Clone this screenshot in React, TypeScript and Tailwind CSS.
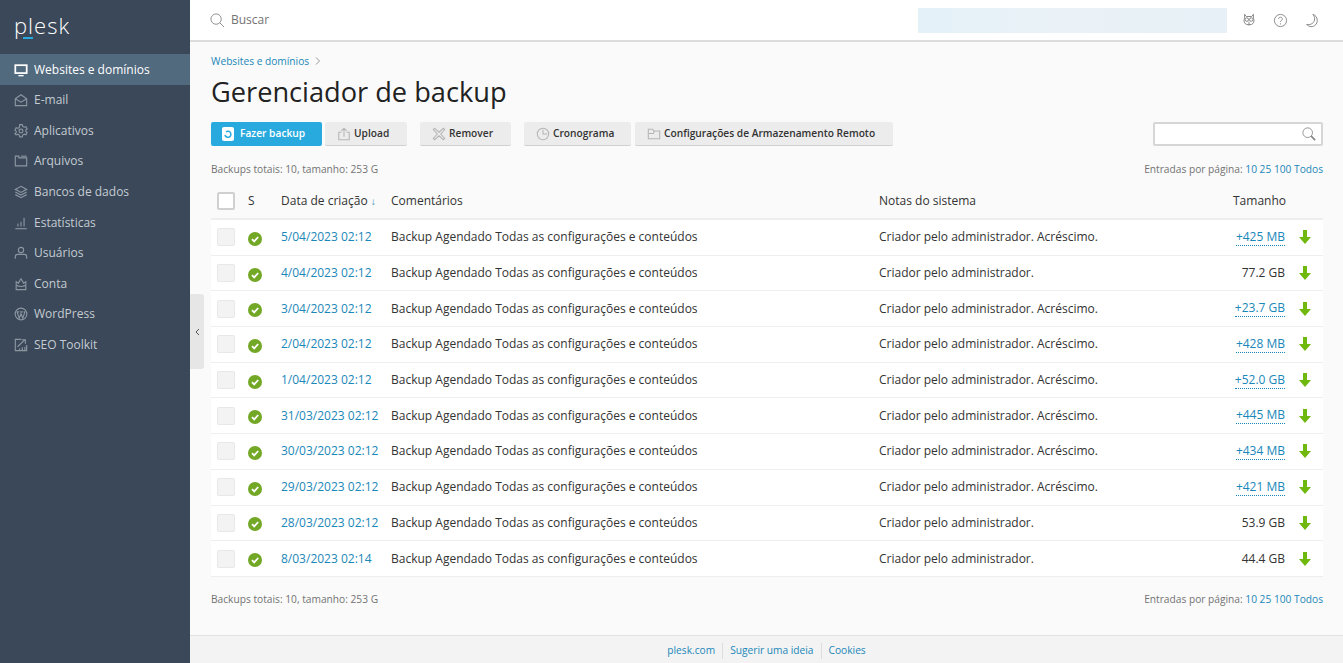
import React from 'react';

const navItems: { label: string; icon: React.ReactNode }[] = [
  { label: 'Websites e domínios', icon: <><rect x="1.5" y="2.5" width="13" height="9" strokeWidth="2" /><path d="M5 14.5h6" strokeWidth="1.5" /></> },
  { label: 'E-mail', icon: <><path d="M1.5 6.5 8 2l6.5 4.5v8h-13z" /><path d="M1.5 6.5 8 10.5l6.5-4" /></> },
  { label: 'Aplicativos', icon: <><path d="M6.5 1.5h3l.4 2 1.8 1 1.9-.7 1.4 2.6-1.5 1.3v1.600l1.500 1.300-1.400 2.600-1.900-.7-1.800 1-.4 2h-3l-.4-2-1.800-1-1.900.7L1 11.900l1.500-1.300V9L1 7.700l1.400-2.600 1.900.7 1.800-1z" transform="translate(0 -.8)" /><circle cx="8" cy="8" r="2.200" /></> },
  { label: 'Arquivos', icon: <><path d="M1.500 13.500v-11h4v2h9v9z" /><path d="M8 2.500h6.500" /></> },
  { label: 'Bancos de dados', icon: <><path d="M8 1.500 14.500 5 8 8.500 1.500 5z" /><path d="m1.500 8 6.500 3.500L14.500 8" /><path d="m1.500 11 6.500 3.500 6.500-3.500" /></> },
  { label: 'Estatísticas', icon: <><path d="M1.500 14.500h13" /><path d="M4.500 12V8.500M8 12V6.500M11.500 12V2" /></> },
  { label: 'Usuários', icon: <><circle cx="8" cy="4.500" r="3" /><path d="M1.500 14.500V12c0-1.500 1.200-2.500 2.500-2.500h8c1.300 0 2.500 1 2.500 2.500v2.500" /></> },
  { label: 'Conta', icon: <><path d="M2.500 5.500 5 7l3-5 3 5 2.500-1.500V14.500h-11z" /><path d="M2.500 9.500c3 1.500 8 1.500 11 0" /></> },
  { label: 'WordPress', icon: <><circle cx="8" cy="8" r="6.700" /><path d="M3.500 5.500 6 13l2-5.500L10 13l2.500-7.500M3 5.500h3M7 5.500h3M11 5.500h2" /></> },
  { label: 'SEO Toolkit', icon: <><path d="M8 1.500H1.500v13h13V8" /><path d="m4 10 8-7.500M8.500 2H13v4.500" /><path d="M6.500 14v-2M9.500 14v-3.500M12.500 14v-4" /></> },
];

const rows = [
  { date: '5/04/2023 02:12', inc: true, size: '+425 MB' },
  { date: '4/04/2023 02:12', inc: false, size: '77.2 GB' },
  { date: '3/04/2023 02:12', inc: true, size: '+23.7 GB' },
  { date: '2/04/2023 02:12', inc: true, size: '+428 MB' },
  { date: '1/04/2023 02:12', inc: true, size: '+52.0 GB' },
  { date: '31/03/2023 02:12', inc: true, size: '+445 MB' },
  { date: '30/03/2023 02:12', inc: true, size: '+434 MB' },
  { date: '29/03/2023 02:12', inc: true, size: '+421 MB' },
  { date: '28/03/2023 02:12', inc: false, size: '53.9 GB' },
  { date: '8/03/2023 02:14', inc: false, size: '44.4 GB' },
];

function Summary() {
  return (
    <div className="flex justify-between text-[10.2px] leading-[14px] text-[#737373]">
      <span>Backups totais: 10, tamanho: 253 G</span>
      <span>
        Entradas por página: <span className="text-[#1a87b9]">10 25 100 Todos</span>
      </span>
    </div>
  );
}

function ToolButton({ label, icon, className }: { label: string; icon: React.ReactNode; className: string }) {
  return (
    <button className={`flex h-6 items-center rounded-[2px] border-b border-[#d0d0d0] bg-[#ececec] pl-[12px] text-[10.2px] font-semibold text-[#333] ${className}`}>
      <svg width="14" height="14" viewBox="0 0 16 16" fill="none" stroke="#b5b5b5" strokeWidth="1.200" className="mr-[3px]">
        {icon}
      </svg>
      {label}
    </button>
  );
}

export default function App() {
  return (
    <div className="flex h-[663px] w-[1343px] overflow-hidden bg-[#fafafa] font-['Open_Sans',sans-serif]">
      <aside className="w-[190px] shrink-0 bg-[#3a4859]">
        <div className="relative h-[54px] pl-[14px] pt-[7px] text-[22px] font-light leading-[36px] tracking-[1px] text-white">
          plesk
          <div className="absolute left-[23px] top-[37px] h-[2px] w-[10px] bg-[#28aade]" />
        </div>
        <nav>
          {navItems.map((item, i) => (
            <div
              key={item.label}
              className={`flex h-[30.55px] items-center pl-[14px] pt-[1px] text-[12px] ${i === 0 ? 'bg-[#526a7e] text-white' : 'text-[#c5cbd1]'}`}
            >
              <svg width="14" height="14" viewBox="0 0 16 16" fill="none" stroke={i === 0 ? '#ffffff' : '#8b96a1'} strokeWidth="1.300" className="mr-[6px] shrink-0">
                {item.icon}
              </svg>
              {item.label}
            </div>
          ))}
        </nav>
      </aside>

      <div className="relative flex min-w-0 flex-1 flex-col">
        <header className="flex h-[42px] shrink-0 items-center border-b-2 border-[#dcdcdc] bg-white pl-[20px]">
          <svg width="15" height="15" viewBox="0 0 16 16" fill="none" stroke="#8a8a8a" className="mr-[6px]">
            <circle cx="6.500" cy="6.500" r="5.500" />
            <path d="m10.500 10.500 4.500 4.500" />
          </svg>
          <span className="text-[12px] text-[#737373]">Buscar</span>
          <div className="ml-[649px] h-[25px] w-[309px] bg-gradient-to-r from-[#e4f1f8] via-[#eaf2f7] to-[#e6f0f6]" />
          <svg width="14" height="14" viewBox="0 0 16 16" fill="none" stroke="#777" className="ml-[15px]">
            <path d="M3 1.500 5 4h6l2-2.500v4.500c1 2 1 4-.500 6-1.500 2-7.500 2-9 0C2 10 2 8 3 6z" />
            <circle cx="5.500" cy="7.500" r="2" />
            <circle cx="10.500" cy="7.500" r="2" />
            <path d="M8 10v4" />
          </svg>
          <svg width="15" height="15" viewBox="0 0 16 16" fill="none" stroke="#888" className="ml-[17px]">
            <circle cx="8" cy="8" r="6.500" />
            <path d="M6 6.300C6 5 7 4.500 8 4.500s2 .7 2 1.800c0 1.400-2 1.700-2 3.200M8 11v1.200" />
          </svg>
          <svg width="14" height="15" viewBox="0 0 16 16" fill="none" stroke="#777" className="ml-[17px]">
            <path d="M9 1c3 1 5 3.500 5 7 0 4-3 7-7 7-2 0-4-1-5-2.500 5 1 9-2 9-6.500C11 4 10.200 2.300 9 1z" />
          </svg>
        </header>

        <main className="flex-1 pl-[21px] pr-[20px] pt-[11px]">
          <div className="flex items-center text-[10.2px] leading-[16px] text-[#1a87b9]">
            Websites e domínios
            <svg width="6" height="8" viewBox="0 0 6 8" fill="none" stroke="#999" className="ml-[6px]">
              <path d="m1 .5 3.500 3.500L1 7.500" />
            </svg>
          </div>
          <h1 className="mt-[5px] text-[27.2px] font-normal leading-[36px] text-[#222]">Gerenciador de backup</h1>

          <div className="mt-[12px] flex items-center">
            <button className="flex h-6 w-[111px] items-center rounded-[2px] bg-[#28aade] pl-[11px] text-[10.2px] font-semibold text-white">
              <svg width="12" height="14" viewBox="0 0 12 14" className="mr-[6px]">
                <path d="M2 0h8a2 2 0 0 1 2 2v10a2 2 0 0 1-2 2H2a2 2 0 0 1-2-2V2a2 2 0 0 1 2-2z" fill="#fff" />
                <path d="M3 8a3 3 0 1 0 1-3" fill="none" stroke="#28aade" strokeWidth="1.500" />
              </svg>
              Fazer backup
            </button>
            <ToolButton
              label="Upload"
              className="ml-[3px] w-[82px]"
              icon={<><path d="M5 6H2v8.500h12V6h-3" /><path d="M8 11V1.500M5 4.500l3-3 3 3" /></>}
            />
            <ToolButton
              label="Remover"
              className="ml-[13px] w-[91px]"
              icon={<path d="M3 1.500 8 6l5-4.500L14.500 3 10 8l4.500 5-1.500 1.500L8 10l-5 4.500L1.500 13 6 8 1.500 3z" />}
            />
            <ToolButton
              label="Cronograma"
              className="ml-[13px] w-[107px]"
              icon={<><circle cx="8" cy="8" r="6.500" /><path d="M8 3v5h5" /></>}
            />
            <ToolButton
              label="Configurações de Armazenamento Remoto"
              className="ml-[4px] w-[258px]"
              icon={<path d="M1.500 13.500v-11h5l1 2h7v9zM1.500 7.500h6l1-3" />}
            />
            <div className="ml-auto flex h-6 w-[170px] items-center justify-end rounded-[2px] border-2 border-[#d6d6d6] bg-white pr-[5px]">
              <svg width="14" height="14" viewBox="0 0 16 16" fill="none" stroke="#888">
                <circle cx="6.500" cy="6.500" r="5.500" />
                <path d="m10.500 10.500 4.500 4.500" strokeWidth="2" />
              </svg>
            </div>
          </div>

          <div className="mt-[16px]">
            <Summary />
          </div>

          <div className="mt-[7px] flex h-[37px] items-center border-b-2 border-[#eeeeee] text-[12px] text-[#333]">
            <div className="ml-[6px] h-[18px] w-[18px] rounded-[2px] border-2 border-[#d0d0d0] bg-white" />
            <div className="ml-[13px] w-[33px]">S</div>
            <div className="w-[110px]">
              Data de criação <span className="text-[10px] text-[#1a87b9]">↓</span>
            </div>
            <div className="w-[488px]">Comentários</div>
            <div className="w-[354px]">Notas do sistema</div>
            <div className="w-[52px]">Tamanho</div>
          </div>

          {rows.map((row) => (
            <div key={row.date} className="flex h-[35.7px] items-center border-b border-[#eeeeee] bg-white text-[12px] text-[#333]">
              <div className="ml-[6px] h-[18px] w-[18px] rounded-[2px] border border-[#e8e8e8] bg-[#f3f3f3]" />
              <div className="ml-[13px] w-[33px] pt-[3px]">
                <svg width="14" height="14" viewBox="0 0 14 14">
                  <circle cx="7" cy="7" r="7" fill="#73a726" />
                  <path d="m4 7.200 2.200 2.200L10.200 5" fill="none" stroke="#fff" strokeWidth="1.800" />
                </svg>
              </div>
              <div className="w-[110px] text-[#1a87b9]">{row.date}</div>
              <div className="w-[488px]">Backup Agendado Todas as configurações e conteúdos</div>
              <div className="w-[322px]">
                {row.inc ? 'Criador pelo administrador. Acréscimo.' : 'Criador pelo administrador.'}
              </div>
              <div className="flex w-[84px] justify-end">
                {row.inc ? (
                  <span className="border-b border-dotted border-[#1a87b9] leading-[16px] text-[#1a87b9]">{row.size}</span>
                ) : (
                  <span className="leading-[16px]">{row.size}</span>
                )}
              </div>
              <svg width="12" height="14" viewBox="0 0 12 14" className="ml-[14px]">
                <path d="M4 0h4v7h4l-6 7-6-7h4z" fill="#6fb80d" />
              </svg>
            </div>
          ))}

          <div className="mt-[15px]">
            <Summary />
          </div>
        </main>

        <footer className="flex h-[28px] shrink-0 items-center justify-center border-t border-[#e2e2e2] bg-[#f3f3f3] pt-[3px] text-[10.2px] text-[#1a87b9]">
          <span className="border-r border-[#dddddd] pr-[7px]">plesk.com</span>
          <span className="border-r border-[#dddddd] px-[7px]">Sugerir uma ideia</span>
          <span className="pl-[7px]">Cookies</span>
        </footer>

        <div className="absolute left-0 top-[294px] flex h-[75px] w-[14px] items-center justify-center rounded-r-[3px] bg-[#e6e6e6]">
          <svg width="5" height="8" viewBox="0 0 5 8" fill="none" stroke="#555">
            <path d="M4 1 1 4l3 3" />
          </svg>
        </div>
      </div>
    </div>
  );
}
